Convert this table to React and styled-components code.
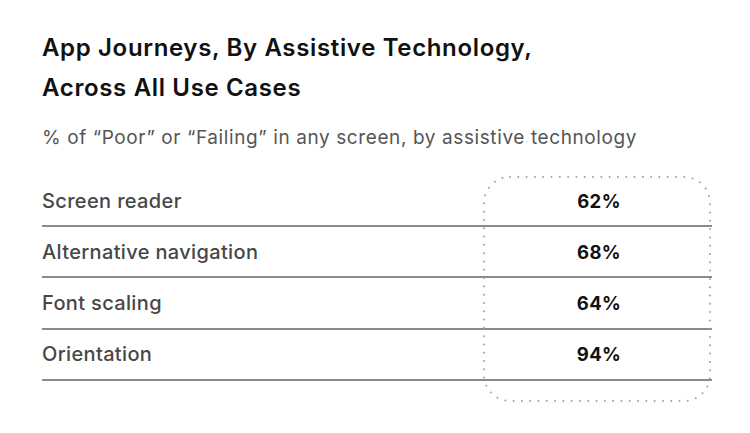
import React from 'react';
import styled, { createGlobalStyle } from 'styled-components';

const Global = createGlobalStyle`
  body {
    margin: 0;
    background: #fff;
    font-family: Inter, "Noto Sans", sans-serif;
  }
`;

const Page = styled.div`
  width: 750px;
  height: 433px;
  padding: 28px 38px 0 42px;
  box-sizing: border-box;
`;

const Title = styled.h1`
  margin: 0;
  font-size: 24px;
  font-weight: 600;
  line-height: 40px;
  color: #111;
  letter-spacing: 0.65px;
`;

const Subtitle = styled.p`
  margin: 17px 0 0;
  font-size: 19px;
  line-height: 26px;
  color: #555;
  letter-spacing: 0.6px;
`;

const Table = styled.div`
  position: relative;
  margin-top: 25px;
  width: 670px;
`;

const Row = styled.div`
  display: grid;
  grid-template-columns: 1fr 228px;
  height: 49.2px;
  align-items: center;
  border-bottom: 2px solid #8a8a8a;
`;

const Label = styled.span`
  font-size: 20px;
  font-weight: 500;
  color: #474747;
  letter-spacing: 0.35px;
`;

const Value = styled.span`
  text-align: center;
  font-size: 18.5px;
  font-weight: 700;
  color: #111;
  letter-spacing: 0.4px;
  padding-left: 2px;
`;

const Highlight = styled.svg`
  position: absolute;
  top: 0;
  right: 0;
  width: 230px;
  height: 228px;
  overflow: visible;
  pointer-events: none;
`;

const rows = [
  ['Screen reader', '62%'],
  ['Alternative navigation', '68%'],
  ['Font scaling', '64%'],
  ['Orientation', '94%'],
];

export default function App() {
  return (
    <>
      <Global />
      <Page>
        <Title>
          App Journeys, By Assistive Technology,
          <br />
          Across All Use Cases
        </Title>
        <Subtitle>% of “Poor” or “Failing” in any screen, by assistive technology</Subtitle>
        <Table>
          {rows.map(([label, value]) => (
            <Row key={label}>
              <Label>{label}</Label>
              <Value>{value}</Value>
            </Row>
          ))}
          <Highlight viewBox="0 0 230 228">
            <rect
              x="2"
              y="1"
              width="226"
              height="224"
              rx="26"
              fill="none"
              stroke="#a0a0a0"
              strokeWidth="2"
              strokeLinecap="round"
              strokeDasharray="0 8.3"
            />
          </Highlight>
        </Table>
      </Page>
    </>
  );
}
